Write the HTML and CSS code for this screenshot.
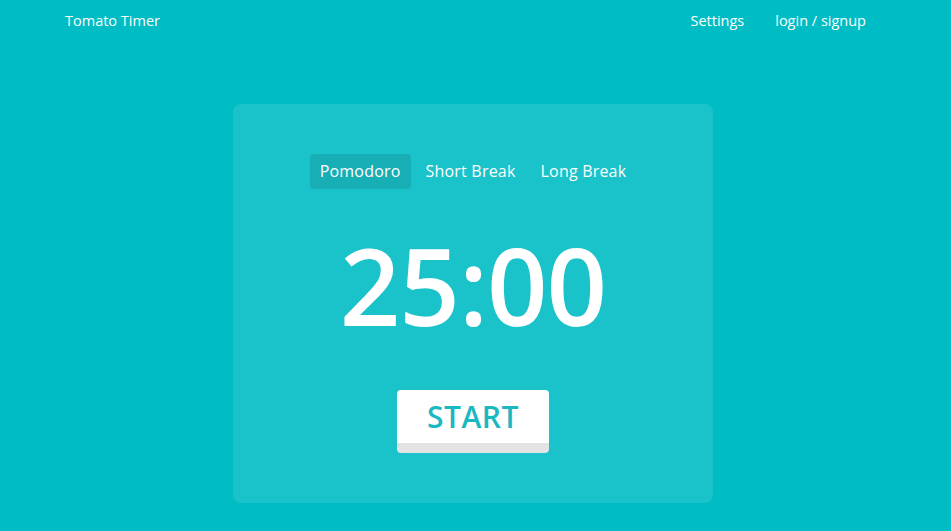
FILE: index.html
```html
<!DOCTYPE html>
<html>
<head>
<meta charset="utf-8">
<link rel="stylesheet" href="styles.css">
</head>
<body>
<header class="nav">
  <div class="brand">Tomato Timer</div>
  <div class="links">
    <span>Settings</span>
    <span>login / signup</span>
  </div>
</header>
<main class="main">
  <section class="card">
    <div class="tabs">
      <span class="tab active">Pomodoro</span>
      <span class="tab">Short Break</span>
      <span class="tab">Long Break</span>
    </div>
    <div class="time">25:00</div>
    <button class="start">START</button>
  </section>
</main>
</body>
</html>
```
FILE: styles.css
```css
* { box-sizing: border-box; }
html, body { margin: 0; height: 100%; }
body {
  background: #00bcc4;
  color: #fff;
  font-family: "Open Sans", "DejaVu Sans", sans-serif;
}
.nav {
  display: flex;
  justify-content: space-between;
  align-items: center;
  padding: 0 85px 0 65px;
  height: 41px;
  font-size: 14.5px;
}
.links { display: flex; gap: 31px; }
.main {
  display: flex;
  justify-content: center;
  padding-top: 63px;
  padding-right: 5px;
}
.card {
  width: 480px;
  height: 399px;
  background: rgba(255,255,255,0.1);
  border-radius: 8px;
  display: flex;
  flex-direction: column;
  align-items: center;
  padding-top: 50px;
}
.tabs { display: flex; }
.tab {
  font-size: 16px;
  font-weight: 500;
  height: 35px;
  line-height: 35px;
  padding: 0 10px;
  border-radius: 4px;
  margin: 0 2.5px;
  letter-spacing: 0.2px;
}
.active { background: rgba(0,0,0,0.1); }
.time {
  font-size: 106px;
  font-weight: 600;
  line-height: 1;
  margin-top: 43px;
  letter-spacing: -1px;
}
.start {
  margin-top: 52px;
  width: 152px;
  height: 63px;
  border: none;
  border-radius: 4px;
  background: #fff;
  border-bottom: 10px solid #e3e3e3;
  color: #1ab8c0;
  font-family: "Open Sans", "DejaVu Sans", sans-serif;
  font-size: 30px;
  font-weight: 600;
  padding: 0;
  line-height: 53px;
  letter-spacing: 0.5px;
}
```
